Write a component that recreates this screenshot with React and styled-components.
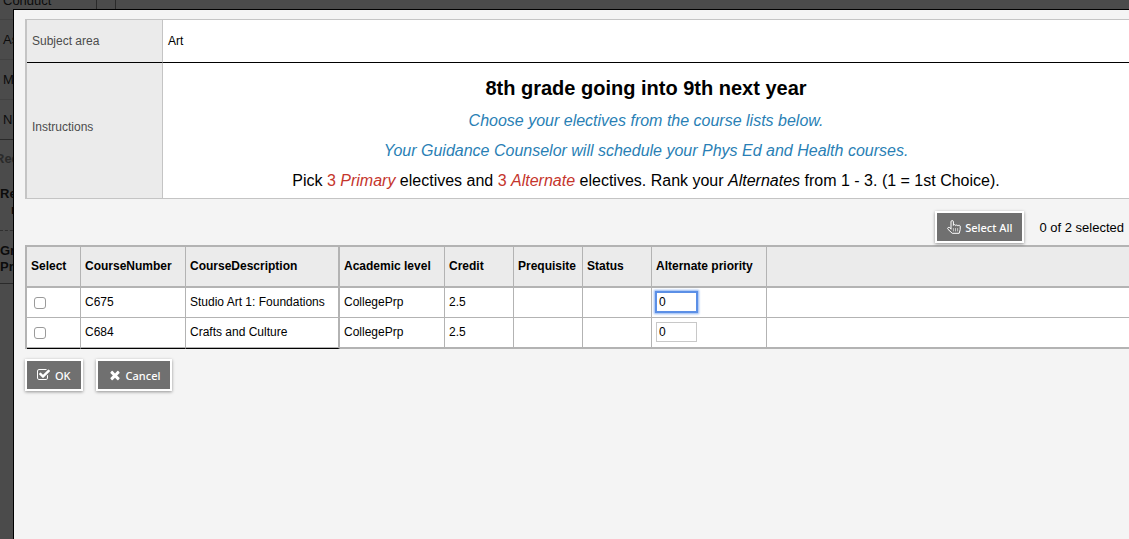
import React, { useState } from 'react'
import styled, { createGlobalStyle, css } from 'styled-components'

const GlobalStyle = createGlobalStyle`
  * {
    box-sizing: border-box;
  }
  body {
    margin: 0;
    background: #4b4b4b;
    color: #000;
    font-family: "Liberation Sans", Arial, sans-serif;
    font-size: 12px;
    overflow: hidden;
  }
`

const Page = styled.div`
  min-height: 100vh;
  overflow: hidden;
`

/* the dimmed page under the dialog */
const Sidebar = styled.div`
  width: 116px;
  color: #0c0c0c;
  font-size: 13px;
  white-space: nowrap;
`

const SideTop = styled.div`
  display: flex;
  height: 20px;
  border-bottom: 1px solid #424242;
`

const SideTab = styled.div`
  width: 97px;
  padding-left: 3px;
  border-right: 1px solid #2a2a2a;
  line-height: 1px;
`

const SideGap = styled.div`
  flex: 1;
  border-right: 1px solid #2a2a2a;
`

const SideItem = styled.div`
  height: 40px;
  padding-left: 3px;
  border-bottom: 1px solid ${props => (props.$last ? '#2a2a2a' : '#424242')};
  line-height: 40px;
`

const SideHeading = styled.div`
  height: 42px;
  color: #2a2a2a;
  font-weight: bold;
  line-height: 38px;
  text-indent: -5px;
`

const SideTask = styled.div`
  height: ${props => (props.$last ? '53px' : '49px')};
  padding-top: ${props => (props.$last ? '12px' : '4px')};
  border-bottom: 1px ${props => (props.$last ? 'solid #2a2a2a' : 'dashed #2f2f2f')};
  font-weight: bold;
  line-height: 16px;
`

const SideNote = styled.div`
  padding-left: 11px;
`

const Dialog = styled.main`
  position: fixed;
  top: 9px;
  right: 0;
  bottom: 0;
  left: 13px;
  padding: 9px 0 0 11px;
  border: solid #000;
  border-width: 1px 0 0 1px;
  background: #f4f4f4;
`

const DetailTable = styled.table`
  width: 100%;
  border: solid #c4c4c4;
  border-width: 1px 0 1px 2px;
  border-spacing: 0;
`

const DetailRow = styled.tr`
  ${props => props.$ruled && css`
    > * {
      height: 43px;
      border-bottom: 1px solid #000;
    }
  `}
`

const DetailLabel = styled.th`
  width: 136px;
  padding: 0 5px ${props => (props.$raised ? '8px' : '0')};
  border-right: 1px solid #c4c4c4;
  background: #ebebeb;
  color: #4c4c4c;
  font-weight: normal;
  text-align: left;
`

const DetailValue = styled.td`
  padding: 0 5px;
  background: #fff;
`

const Instructions = styled.div`
  display: flex;
  flex-direction: column;
  gap: 10px;
  padding: 12px 0 7px;
  font-size: 16px;
  line-height: 20px;
  text-align: center;
`

const Title = styled.h1`
  margin: 0;
  font-size: 20px;
  line-height: 26px;
`

const Line = styled.p`
  margin: 0;
`

const BlueLine = styled(Line)`
  color: #2a7fb5;
  font-style: italic;
`

const Red = styled.span`
  color: #c5352c;
`

const Toolbar = styled.div`
  display: flex;
  justify-content: flex-end;
  align-items: center;
  gap: 15px;
  padding: 12px 5px 2px 0;
`

const Count = styled.span`
  font-size: 13px;
`

const Button = styled.button`
  display: flex;
  align-items: center;
  gap: 4px;
  height: 32px;
  padding: 0 10px;
  border: 2px solid #fff;
  background: #707070;
  box-shadow: 0 1px 3px rgba(0, 0, 0, 0.4);
  color: #fff;
  font-family: "Noto Sans", "Lucida Grande", sans-serif;
  font-size: 11px;
  font-weight: 500;

  svg {
    width: 14px;
    height: 14px;
    fill: currentColor;
  }
`

const CourseTable = styled.table`
  width: 100%;
  border: solid #b3b3b3;
  border-width: 2px 0 0 2px;
  border-spacing: 0;
  table-layout: fixed;
  text-align: left;
`

const Col = styled.col`
  width: ${props => props.$width};
`

const HeadCell = styled.th`
  height: 41px;
  padding: 0 0 2px 4px;
  border: solid #b3b3b3;
  border-width: 0 ${props => props.$edge || '1px'} 2px 0;
  background: #ebebeb;
  white-space: nowrap;
`

const Cell = styled.td`
  height: ${props => (props.$last ? '31px' : '30px')};
  padding: 0 0 2px 4px;
  border: solid #b3b3b3;
  border-width: 0 ${props => props.$edge || '1px'} ${props => (props.$last ? '2px' : '1px')} 0;
  background: #fff;
  white-space: nowrap;

  ${props => props.$last && props.$frozen && css`
    padding-bottom: 3px;
    border-bottom: 1px solid #000;
    box-shadow: inset 0 -1px 0 #b3b3b3;
  `}
`

const Check = styled.input`
  display: block;
  appearance: none;
  width: 12px;
  height: 12px;
  margin: 2px 0 0 3px;
  border: 1px solid #9a9a9a;
  border-radius: 3px;
  background: #fff;

  &:checked {
    background: #4a86e8;
  }
`

const Priority = styled.input`
  display: block;
  width: 41px;
  height: 20px;
  padding: 0 2px;
  border: 1px solid #c8c8c8;
  font-family: inherit;
  font-size: 12px;
  outline: none;

  ${props => props.$active && css`
    border-color: #5b8fe6;
    box-shadow: 0 0 0 1px #5b8fe6, 0 0 2px 2px #8fb4f2;
  `}
`

const Footer = styled.div`
  display: flex;
  gap: 13px;
  padding-top: 10px;
`

function HandIcon() {
  return (
    <svg viewBox="0 0 14 14" aria-hidden="true">
      <g style={{ fill: 'none' }} stroke="currentColor" strokeLinecap="round" strokeLinejoin="round">
        <path d="M4 8.8V1.8a1.2 1.2 0 0 1 2.4 0V5.4a1.2 1.2 0 0 1 2.3 .2a1.2 1.2 0 0 1 2.2 .5a1.2 1.2 0 0 1 2.3 .8V9.6L12.2 13.3H5.2L1 9.3a1.2 1.2 0 0 1 .2-1.8a1.3 1.3 0 0 1 1.6 .2L4 8.8" />
        <path d="M6.4 8.5V11M8.5 8.5V11M10.6 8.5V11" strokeWidth=".6" />
      </g>
    </svg>
  )
}

function CheckIcon() {
  return (
    <svg viewBox="0 0 1792 1792" aria-hidden="true">
      <path d="M1408 930v318q0 119-84.5 203.5t-203.5 84.5h-832q-119 0-203.5-84.5t-84.5-203.5v-832q0-119 84.5-203.5t203.5-84.5h832q63 0 117 25 15 7 18 23 3 17-9 29l-49 49q-10 10-23 10-3 0-9-2-23-6-45-6h-832q-66 0-113 47t-47 113v832q0 66 47 113t113 47h832q66 0 113-47t47-113v-254q0-13 9-22l64-64q10-10 23-10 6 0 12 3 20 8 20 29zm231-489l-814 814q-24 24-57 24t-57-24l-430-430q-24-24-24-57t24-57l110-110q24-24 57-24t57 24l263 263 647-647q24-24 57-24t57 24l110 110q24 24 24 57t-24 57z" />
    </svg>
  )
}

function CrossIcon() {
  return (
    <svg viewBox="0 0 1792 1792" aria-hidden="true">
      <path d="M1490 1322q0 40-28 68l-136 136q-28 28-68 28t-68-28l-294-294-294 294q-28 28-68 28t-68-28l-136-136q-28-28-28-68t28-68l294-294-294-294q-28-28-28-68t28-68l136-136q28-28 68-28t68 28l294 294 294-294q28-28 68-28t68 28l136 136q28 28 28 68t-28 68l-294 294 294 294q28 28 28 68z" />
    </svg>
  )
}

const columns = [
  { name: 'Select', width: '54px' },
  { name: 'CourseNumber', width: '105px' },
  { name: 'CourseDescription', width: '154px', edge: '2px' },
  { name: 'Academic level', width: '105px' },
  { name: 'Credit', width: '69px' },
  { name: 'Prequisite', width: '69px' },
  { name: 'Status', width: '69px' },
  { name: 'Alternate priority', width: '115px' },
  { name: '', width: 'auto', edge: '0' },
]

const courses = [
  { number: 'C675', description: 'Studio Art 1: Foundations', level: 'CollegePrp', credit: '2.5' },
  { number: 'C684', description: 'Crafts and Culture', level: 'CollegePrp', credit: '2.5' },
]

function CourseRow({ course, last, active, checked, onCheck }) {
  return (
    <tr>
      <Cell $last={last} $frozen>
        <Check type="checkbox" aria-label={course.number} checked={checked} onChange={onCheck} />
      </Cell>
      <Cell $last={last} $frozen>{course.number}</Cell>
      <Cell $last={last} $frozen $edge="2px">{course.description}</Cell>
      <Cell $last={last}>{course.level}</Cell>
      <Cell $last={last}>{course.credit}</Cell>
      <Cell $last={last} />
      <Cell $last={last} />
      <Cell $last={last}>
        <Priority type="text" aria-label="Alternate priority" defaultValue="0" $active={active} />
      </Cell>
      <Cell $last={last} $edge="0" />
    </tr>
  )
}

function App() {
  const [selected, setSelected] = useState([])

  function toggle(number) {
    if (selected.includes(number)) {
      setSelected(selected.filter(n => n !== number))
    } else {
      setSelected([...selected, number])
    }
  }

  return (
    <Page>
      <GlobalStyle />
      <Sidebar aria-hidden="true">
        <SideTop>
          <SideTab>Conduct</SideTab>
          <SideGap />
        </SideTop>
        <SideItem>As</SideItem>
        <SideItem>M</SideItem>
        <SideItem $last>N</SideItem>
        <SideHeading>Req</SideHeading>
        <SideTask>
          Re
          <SideNote>r</SideNote>
        </SideTask>
        <SideTask $last>
          Gr<br />Pr
        </SideTask>
      </Sidebar>

      <Dialog>
        <DetailTable>
          <tbody>
            <DetailRow $ruled>
              <DetailLabel scope="row">Subject area</DetailLabel>
              <DetailValue>Art</DetailValue>
            </DetailRow>
            <DetailRow>
              <DetailLabel scope="row" $raised>Instructions</DetailLabel>
              <DetailValue>
                <Instructions>
                  <Title>8th grade going into 9th next year</Title>
                  <BlueLine>Choose your electives from the course lists below.</BlueLine>
                  <BlueLine>Your Guidance Counselor will schedule your Phys Ed and Health courses.</BlueLine>
                  <Line>
                    Pick <Red>3 <em>Primary</em></Red> electives and <Red>3 <em>Alternate</em></Red> electives.
                    {' '}Rank your <em>Alternates</em> from 1 - 3. (1 = 1st Choice).
                  </Line>
                </Instructions>
              </DetailValue>
            </DetailRow>
          </tbody>
        </DetailTable>

        <Toolbar>
          <Button type="button" onClick={() => setSelected(courses.map(c => c.number))}>
            <HandIcon />
            Select All
          </Button>
          <Count>{selected.length} of {courses.length} selected</Count>
        </Toolbar>

        <CourseTable>
          <colgroup>
            {columns.map(col => <Col key={col.name} $width={col.width} />)}
          </colgroup>
          <thead>
            <tr>
              {columns.map(col => (
                <HeadCell key={col.name} scope="col" $edge={col.edge}>{col.name}</HeadCell>
              ))}
            </tr>
          </thead>
          <tbody>
            {courses.map((course, i) => (
              <CourseRow
                key={course.number}
                course={course}
                last={i === courses.length - 1}
                active={i === 0}
                checked={selected.includes(course.number)}
                onCheck={() => toggle(course.number)}
              />
            ))}
          </tbody>
        </CourseTable>

        <Footer>
          <Button type="button"><CheckIcon />OK</Button>
          <Button type="button"><CrossIcon />Cancel</Button>
        </Footer>
      </Dialog>
    </Page>
  )
}

export default App
